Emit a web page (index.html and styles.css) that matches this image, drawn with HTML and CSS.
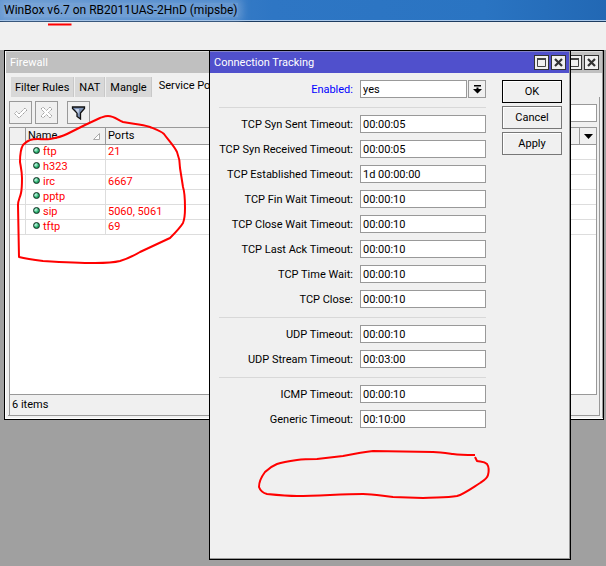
FILE: index.html
```
<!DOCTYPE html>
<html lang="en">

<head>
    <meta charset="UTF-8">
    <meta name="viewport" content="width=device-width, initial-scale=1.0">
    <title>WinBox</title>
    <link rel="stylesheet" href="styles.css">
</head>

<body>
    <header class="app-title"><span>WinBox v6.7 on RB2011UAS-2HnD (mipsbe)</span></header>
    <div class="app-toolbar"></div>

    <main class="desktop">
        <section class="window firewall">
            <div class="titlebar inactive">
                <h2>Firewall</h2>
                <button class="win-btn" aria-label="Maximize"><svg width="9" height="9" viewBox="0 0 9 9"><path d="M.5 1v7.500h8V1" fill="none" stroke="#444"/><path d="M0 1h9" stroke="#444" stroke-width="2"/></svg></button>
                <button class="win-btn" aria-label="Close"><svg width="9" height="9" viewBox="0 0 9 9"><path d="M1 1l7 7M8 1L1 8" stroke="#333" stroke-width="2.200"/></svg></button>
            </div>
            <nav class="tabs">
                <button class="tab">Filter Rules</button>
                <button class="tab">NAT</button>
                <button class="tab">Mangle</button>
                <button class="tab active">Service Ports</button>
            </nav>
            <div class="panel">
                <div class="tools">
                    <button class="tool" aria-label="Enable"><svg width="15" height="15" viewBox="0 0 15 15"><path d="M1.500 8.500l2-2 2.500 2.500 6-6 2 2-8 8z" fill="#fff" stroke="#999" stroke-dasharray="1.500 .7"/></svg></button>
                    <button class="tool" aria-label="Disable"><svg width="15" height="15" viewBox="0 0 15 15"><path d="M2 4l2-2 3.500 3.500L11 2l2 2-3.500 3.500L13 11l-2 2-3.500-3.500L4 13l-2-2 3.500-3.500z" fill="#fff" stroke="#999" stroke-dasharray="1.500 .7"/></svg></button>
                    <button class="tool filter" aria-label="Filter"><svg width="15" height="15" viewBox="0 0 15 15"><path d="M1.500 2h12v1.500L9.500 8v6L6 11.500V8L1.500 3.500z" fill="#7d92b5" stroke="#111" stroke-width="1.300"/><path d="M4 4h4L7.500 9z" fill="#c5d3ea"/></svg></button>
                    <input class="find" type="text" aria-label="Find">
                </div>
                <div class="list">
                    <table>
                        <thead>
                            <tr>
                                <th class="col-flag"></th>
                                <th class="col-name">Name<svg class="sort" width="7" height="7" viewBox="0 0 7 7"><path d="M.5 6.500h6v-6z" fill="#fff" stroke="#aaa"/></svg></th>
                                <th>Ports</th>
                                <th class="col-menu"><button class="col-btn" aria-label="Columns"><svg width="9" height="5" viewBox="0 0 9 5"><path d="M0 0h9L4.500 5z"/></svg></button></th>
                            </tr>
                        </thead>
                        <tbody>
                            <tr><td></td><td><i class="dot"></i>ftp</td><td colspan="2">21</td></tr>
                            <tr><td></td><td><i class="dot"></i>h323</td><td colspan="2"></td></tr>
                            <tr><td></td><td><i class="dot"></i>irc</td><td colspan="2">6667</td></tr>
                            <tr><td></td><td><i class="dot"></i>pptp</td><td colspan="2"></td></tr>
                            <tr><td></td><td><i class="dot"></i>sip</td><td colspan="2">5060, 5061</td></tr>
                            <tr><td></td><td><i class="dot"></i>tftp</td><td colspan="2">69</td></tr>
                        </tbody>
                    </table>
                </div>
                <div class="status">6 items</div>
            </div>
        </section>

        <section class="window dialog">
            <div class="titlebar">
                <h2>Connection Tracking</h2>
                <button class="win-btn" aria-label="Maximize"><svg width="9" height="9" viewBox="0 0 9 9"><path d="M.5 1v7.500h8V1" fill="none" stroke="#444"/><path d="M0 1h9" stroke="#444" stroke-width="2"/></svg></button>
                <button class="win-btn" aria-label="Close"><svg width="9" height="9" viewBox="0 0 9 9"><path d="M1 1l7 7M8 1L1 8" stroke="#333" stroke-width="2.200"/></svg></button>
            </div>
            <form class="dialog-body">
                <div class="fields">
                    <div class="row">
                        <label class="changed" for="enabled">Enabled:</label>
                        <div class="combo">
                            <input type="text" id="enabled" value="yes">
                            <button type="button" class="drop" aria-label="Choose"><svg width="9" height="9" viewBox="0 0 9 9"><path d="M1 0h7v1.500H1zM3.500 2.500h2V4H9L4.500 8.500 0 4h3.500z"/></svg></button>
                        </div>
                    </div>
                    <hr>
                    <div class="row"><label for="syn-sent">TCP Syn Sent Timeout:</label><input type="text" id="syn-sent" value="00:00:05"></div>
                    <div class="row"><label for="syn-recv">TCP Syn Received Timeout:</label><input type="text" id="syn-recv" value="00:00:05"></div>
                    <div class="row"><label for="established">TCP Established Timeout:</label><input type="text" id="established" value="1d 00:00:00"></div>
                    <div class="row"><label for="fin-wait">TCP Fin Wait Timeout:</label><input type="text" id="fin-wait" value="00:00:10"></div>
                    <div class="row"><label for="close-wait">TCP Close Wait Timeout:</label><input type="text" id="close-wait" value="00:00:10"></div>
                    <div class="row"><label for="last-ack">TCP Last Ack Timeout:</label><input type="text" id="last-ack" value="00:00:10"></div>
                    <div class="row"><label for="time-wait">TCP Time Wait:</label><input type="text" id="time-wait" value="00:00:10"></div>
                    <div class="row"><label for="tcp-close">TCP Close:</label><input type="text" id="tcp-close" value="00:00:10"></div>
                    <hr>
                    <div class="row"><label for="udp">UDP Timeout:</label><input type="text" id="udp" value="00:00:10"></div>
                    <div class="row"><label for="udp-stream">UDP Stream Timeout:</label><input type="text" id="udp-stream" value="00:03:00"></div>
                    <hr>
                    <div class="row"><label for="icmp">ICMP Timeout:</label><input type="text" id="icmp" value="00:00:10"></div>
                    <div class="row"><label for="generic">Generic Timeout:</label><input type="text" id="generic" value="00:10:00"></div>
                </div>
                <div class="actions">
                    <button type="button" class="btn default">OK</button>
                    <button type="button" class="btn">Cancel</button>
                    <button type="button" class="btn">Apply</button>
                </div>
            </form>
        </section>
    </main>

    <!-- red pen marks -->
    <svg class="marks" width="606" height="566" viewBox="0 0 606 566">
        <path d="M48 24.500H71.500"/>
        <path d="M23 145C20 150 20 156 20 162C21 168 22 172 22 178C22 184 22 189 21 193C20 198 18 200 18 205L19 257C27 259 35 260 43 261C60 262 78 263 95 263C104 263 112 263 120 261C127 259 133 256 140 252L170 238C175 233 180 228 183 223C185 218 185 213 185 208C185 200 185 193 183 187L180 168C180 162 179 157 177 152C174 146 169 141 164 134C161 131 155 129 150 127C141 124 132 124 123 122C118 120 114 116 108 116C105 116 103 117 100 118L85 125L67 134C61 137 56 138 50 139C43 140 36 138 30 140C27 141 25 143 23 145Z"/>
        <path d="M475 455C468 455 460 455 453 454C446 453 440 452 433 452L373 451C363 452 353 454 343 456L317 459C310 459 304 459 297 460C290 461 283 462 277 464C272 466 268 469 265 472C262 476 259 482 259 487C260 490 263 493 267 494C277 495 287 496 297 496C319 496 341 494 363 494C373 494 383 496 393 497L423 498C435 497 446 498 457 496C464 494 472 488 480 483C483 481 487 479 488 475C489 471 489 467 487 464C484 461 480 462 477 461L475 457"/>
    </svg>
</body>

</html>
```
FILE: styles.css
```
* {
    box-sizing: border-box;
}

body {
    margin: 0;
    height: 100vh;
    display: flex;
    flex-direction: column;
    overflow: hidden;
    background: #a0a0a0;
    color: #000;
    font: 11px/15px Roboto, "Liberation Sans", sans-serif;
}

button,
input {
    font: inherit;
    color: inherit;
    margin: 0;
    padding: 0;
    border-radius: 0;
}

button {
    display: flex;
    align-items: center;
    justify-content: center;
}

.app-title {
    height: 22px;
    padding-left: 4px;
    border-bottom: 1px solid #1d3c60;
    box-shadow: inset 0 -1px #a9c8ea;
    background: linear-gradient(to right, #5f94d0, #2e76c4 45%, #2a74c2 80%, #2268b4);
    font: 12px/21px Roboto, "Open Sans", sans-serif;
    white-space: nowrap;
}

.app-title span {
    background: rgba(150, 182, 222, 0.5);
    box-shadow: 0 0 8px 4px rgba(150, 182, 222, 0.5);
}

.app-toolbar {
    position: relative;
    height: 28px;
    background: #f0f0f0;
}

.desktop {
    flex: 1;
    position: relative;
}

.window {
    position: absolute;
    top: 0;
    display: flex;
    flex-direction: column;
    border: 1px solid #000;
    background: #f0f0f0;
}

.firewall {
    left: 4px;
    right: 2px;
    bottom: 146px;
    box-shadow: inset 1px -1px #fff, inset -1px -1px #999;
}

.dialog {
    left: 209px;
    right: 35px;
    bottom: 6px;
    box-shadow: inset -1px -1px #999;
}

.titlebar {
    display: flex;
    align-items: center;
    gap: 2px;
    height: 22px;
    padding: 0 3px 0 4px;
    margin-right: 1px;
    border-top: 1px solid #8484c8;
    background: #5050cc;
    color: #fff;
}

.titlebar.inactive {
    margin-left: 1px;
    border-top-color: #ddd;
    background: #c0c0c0;
}

.titlebar h2 {
    flex: 1;
    margin: 0;
    font-size: 11px;
    font-weight: normal;
}

.win-btn {
    width: 15px;
    height: 15px;
    border: 1px solid #333;
    background: #f0f0f0;
}

.tabs {
    display: flex;
    align-items: flex-end;
    height: 24px;
    padding-left: 5px;
}

.tab {
    height: 20px;
    padding: 0 4px;
    border: 0;
    border-right: 1px solid #c8c8c8;
    border-left: 1px solid #f0f0f0;
    background: #d8d8d8;
    white-space: nowrap;
}

.tab.active {
    height: 23px;
    padding: 0 6px;
    background: #f0f0f0;
}

.panel {
    flex: 1;
    display: flex;
    flex-direction: column;
    margin: 0 3px 3px;
    padding: 4px 2px 0 1px;
    border-right: 1px solid #999;
    border-bottom: 1px solid #999;
}

.tools {
    display: flex;
    align-items: center;
    gap: 3px;
    height: 23px;
}

.tool {
    width: 23px;
    height: 23px;
    border: 1px solid #999;
    background: #f0f0f0;
}

.tool.filter {
    margin-left: 6px;
}

.find {
    width: 100px;
    height: 18px;
    margin-left: auto;
    border: 1px solid #999;
    background: #fff;
}

.list {
    flex: 1;
    margin-top: 3px;
    border: 1px solid #999;
    background: #fff;
}

table {
    width: 100%;
    table-layout: fixed;
    border-collapse: separate;
    border-spacing: 0;
}

th,
td {
    height: 15px;
    padding: 0 2px;
    border-right: 1px solid #ddd;
    border-bottom: 1px solid #ddd;
    line-height: 14px;
    text-align: left;
    font-weight: normal;
}

th {
    height: 17px;
    border-color: #999;
    background: #f0f0f0;
}

td {
    color: #f00;
}

td:nth-child(2) {
    padding-left: 7px;
}

th:last-child,
td:last-child {
    border-right: 0;
}

.col-flag {
    width: 16px;
}

.col-name {
    width: 80px;
}

.col-menu {
    width: 16px;
    padding: 0;
}

.sort {
    float: right;
    margin: 4px 3px 0 0;
}

.col-btn {
    width: 100%;
    height: 14px;
    border: 0;
    background: none;
}

.dot {
    display: inline-block;
    width: 7px;
    height: 7px;
    margin-right: 3px;
    border: 1px solid #0a2a1c;
    border-radius: 50%;
    background: radial-gradient(circle at 35% 35%, #cfe, #2a6 60%);
    vertical-align: 1px;
}

.status {
    height: 20px;
    padding-left: 2px;
    border-left: 1px solid #999;
    line-height: 20px;
}

.dialog-body {
    display: flex;
    gap: 16px;
    padding: 7px 8px 0 9px;
}

.fields {
    flex: 1;
    min-width: 0;
    display: flex;
    flex-direction: column;
    gap: 7px;
}

.row {
    display: grid;
    grid-template-columns: minmax(0, 1fr) 126px;
    gap: 7px;
    height: 18px;
    align-items: center;
}

.row label {
    text-align: right;
    white-space: nowrap;
}

.row label.changed {
    color: #00f;
}

.row input {
    width: 100%;
    height: 18px;
    padding: 0 2px;
    border: 1px solid #999;
    background: #fff;
}

.row .combo {
    display: flex;
    gap: 1px;
}

.combo input {
    flex: 1;
    min-width: 0;
}

.drop {
    width: 18px;
    height: 18px;
    border: 1px solid #999;
    background: #f0f0f0;
}

hr {
    width: 100%;
    height: 3px;
    margin: 0;
    border: 0;
    border-bottom: 1px solid #d8d8d8;
}

.actions {
    display: flex;
    flex-direction: column;
    gap: 3px;
    width: 60px;
}

.btn {
    height: 23px;
    border: 1px solid #777;
    background: #f0f0f0;
    box-shadow: inset 1px 1px #fff;
}

.btn.default {
    border-color: #000;
}

.marks {
    position: absolute;
    top: 0;
    left: 0;
    pointer-events: none;
}

.marks path {
    fill: none;
    stroke: #f00;
    stroke-width: 2;
    stroke-linejoin: round;
}
```
